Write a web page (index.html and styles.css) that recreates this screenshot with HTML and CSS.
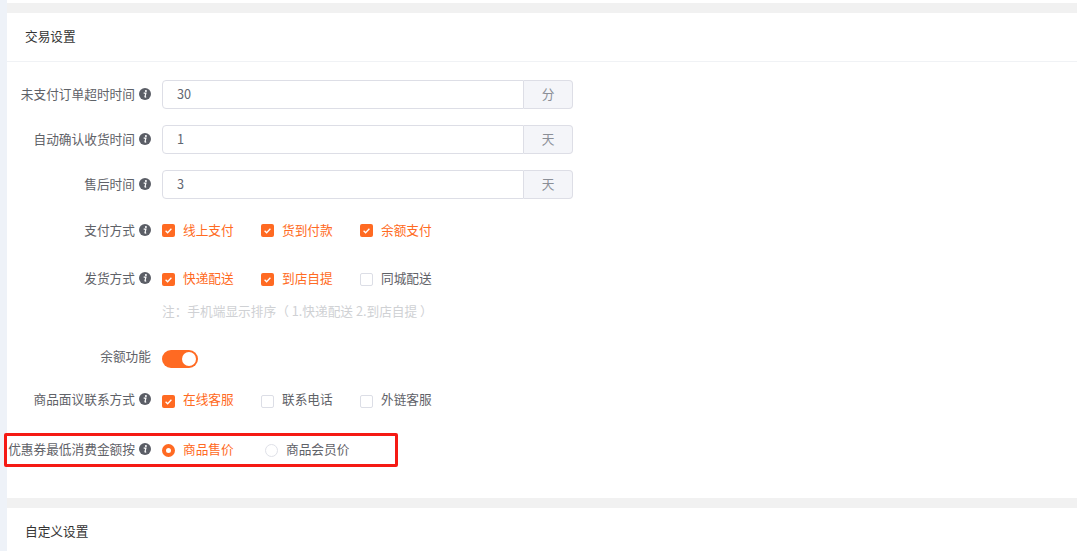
FILE: index.html
```html
<!DOCTYPE html>
<html lang="zh-CN">
<head>
<meta charset="utf-8">
<title>交易设置</title>
<link rel="stylesheet" href="styles.css">
</head>
<body>
<svg class="sprite" width="0" height="0" aria-hidden="true">
  <symbol id="info" viewBox="0 0 12 12">
    <circle cx="6" cy="6" r="6" fill="#5b5e66"/>
    <circle cx="6.9" cy="3" r="1.05" fill="#fff"/>
    <path d="M4.7 5.2h2.2L6 8.7c-.1.5.4.5 1.2 0" fill="none" stroke="#fff" stroke-width="1.2"/>
  </symbol>
</svg>
<div class="page">
  <aside class="rail"></aside>
  <main class="main">
    <section class="card">
      <h2 class="card-title">交易设置</h2>
      <form class="form">
        <div class="row row-input">
          <div class="label">未支付订单超时时间<svg class="info"><use href="#info"/></svg></div>
          <div class="group"><div class="input">30</div><div class="addon">分</div></div>
        </div>
        <div class="row row-input">
          <div class="label">自动确认收货时间<svg class="info"><use href="#info"/></svg></div>
          <div class="group"><div class="input">1</div><div class="addon">天</div></div>
        </div>
        <div class="row row-input">
          <div class="label">售后时间<svg class="info"><use href="#info"/></svg></div>
          <div class="group"><div class="input">3</div><div class="addon">天</div></div>
        </div>
        <div class="row row-pay">
          <div class="label">支付方式<svg class="info"><use href="#info"/></svg></div>
          <div class="options">
            <label class="opt on"><span class="check"><svg viewBox="0 0 13 13"><path d="M3.6 6.8l2 2 3.8-4"/></svg></span>线上支付</label>
            <label class="opt on"><span class="check"><svg viewBox="0 0 13 13"><path d="M3.6 6.8l2 2 3.8-4"/></svg></span>货到付款</label>
            <label class="opt on"><span class="check"><svg viewBox="0 0 13 13"><path d="M3.6 6.8l2 2 3.8-4"/></svg></span>余额支付</label>
          </div>
        </div>
        <div class="row row-ship">
          <div class="label">发货方式<svg class="info"><use href="#info"/></svg></div>
          <div class="options">
            <label class="opt on"><span class="check"><svg viewBox="0 0 13 13"><path d="M3.6 6.8l2 2 3.8-4"/></svg></span>快递配送</label>
            <label class="opt on"><span class="check"><svg viewBox="0 0 13 13"><path d="M3.6 6.8l2 2 3.8-4"/></svg></span>到店自提</label>
            <label class="opt"><span class="check"></span>同城配送</label>
          </div>
        </div>
        <p class="hint">注：手机端显示排序（ 1.快递配送 2.到店自提 ）</p>
        <div class="row row-switch">
          <div class="label">余额功能</div>
          <span class="switch"><span class="knob"></span></span>
        </div>
        <div class="row row-contact">
          <div class="label">商品面议联系方式<svg class="info"><use href="#info"/></svg></div>
          <div class="options">
            <label class="opt on"><span class="check"><svg viewBox="0 0 13 13"><path d="M3.6 6.8l2 2 3.8-4"/></svg></span>在线客服</label>
            <label class="opt"><span class="check"></span>联系电话</label>
            <label class="opt"><span class="check"></span>外链客服</label>
          </div>
        </div>
        <div class="row row-coupon">
          <div class="label">优惠券最低消费金额按<svg class="info"><use href="#info"/></svg></div>
          <div class="options radios">
            <label class="opt on"><span class="radio"></span>商品售价</label>
            <label class="opt"><span class="radio"></span>商品会员价</label>
          </div>
          <div class="highlight"></div>
        </div>
      </form>
    </section>
    <section class="card">
      <h2 class="card-title">自定义设置</h2>
    </section>
  </main>
</div>
</body>
</html>
```

FILE: styles.css
```css
* { box-sizing: border-box; }
html, body { margin: 0; height: 100%; overflow: hidden; background: #fff; }
body { font-family: "Noto Sans CJK SC", "Liberation Sans", sans-serif; font-size: 12.7px; color: #5f6268; }
.sprite { position: absolute; }
.page { display: flex; height: 551px; }
.rail { width: 7px; flex: none; background: #eef2f8; }
.main { flex: 1; min-width: 0; padding-top: 3px; }
.card { border-top: 10px solid #f1f1f1; background: #fff; }
.card-title { margin: 0; height: 49px; padding: 0 18px; line-height: 46px; font-size: 12.7px; font-weight: 400; color: #333; border-bottom: 1px solid #f0f2f5; }
.form { height: 436px; padding-top: 18px; }
.row { display: flex; align-items: center; height: 29px; position: relative; }
.row-input { margin-bottom: 16px; }
.row-ship { margin-top: 20px; }
.row-switch { margin-top: 23px; }
.row-contact { margin-top: 13px; }
.row-coupon { margin-top: 20px; }
.label { width: 144px; flex: none; margin-right: 11px; display: flex; justify-content: flex-end; align-items: center; white-space: nowrap; line-height: 20px; }
.row-input .label, .row-ship .label, .row-coupon .label { padding-bottom: 2px; }
.row-contact .label { padding-bottom: 3px; }
.row-switch .label { padding-bottom: 6px; }
.info { width: 12px; height: 12px; margin-left: 4px; flex: none; }
.group { display: flex; width: 411px; height: 29px; }
.input { flex: 1; padding-left: 14px; line-height: 25px; border: 1px solid #dddee6; border-radius: 4px 0 0 4px; color: #5f6670; }
.addon { width: 49px; text-align: center; line-height: 25px; border: 1px solid #dddee6; border-left: 0; border-radius: 0 4px 4px 0; background: #f4f5f9; color: #8b8f97; }
.options { display: flex; }
.opt { display: flex; align-items: center; width: 99px; white-space: nowrap; }
.radios .opt { width: 103px; }
.opt.on { color: #ff6a22; }
.row-ship .opt, .row-coupon .opt { padding-bottom: 2px; }
.row-contact .opt { padding-bottom: 4px; }
.check { width: 13px; height: 13px; margin-right: 8px; margin-top: 2px; border: 1px solid #dcdee6; border-radius: 2px; background: #fff; flex: none; }
.row-ship .check { margin-top: 4px; }
.row-contact .check { margin-top: 6px; }
.opt.on .check { border: 0; background: #ff6a22; }
.check svg { display: block; width: 13px; height: 13px; fill: none; stroke: #fff; stroke-width: 1.3; }
.radio { width: 13px; height: 13px; margin-right: 8px; margin-top: 3px; border: 1px solid #dfe1e8; border-radius: 50%; background: #fff; flex: none; }
.opt.on .radio { border: 4px solid #ff6a22; }
.hint { margin: 8px 0 0 155px; height: 20px; line-height: 20px; color: #cfd1d4; white-space: nowrap; font-family: "Noto Sans CJK TC", "Liberation Sans", sans-serif; }
.switch { width: 36px; height: 18px; border-radius: 9px; background: #ff6a22; display: flex; justify-content: flex-end; padding: 2px; }
.knob { width: 14px; height: 14px; border-radius: 50%; background: #fff; }
.highlight { position: absolute; left: -3px; top: -2px; width: 394px; height: 34px; border: 3px solid #f51a14; border-radius: 2px; pointer-events: none; }
```
